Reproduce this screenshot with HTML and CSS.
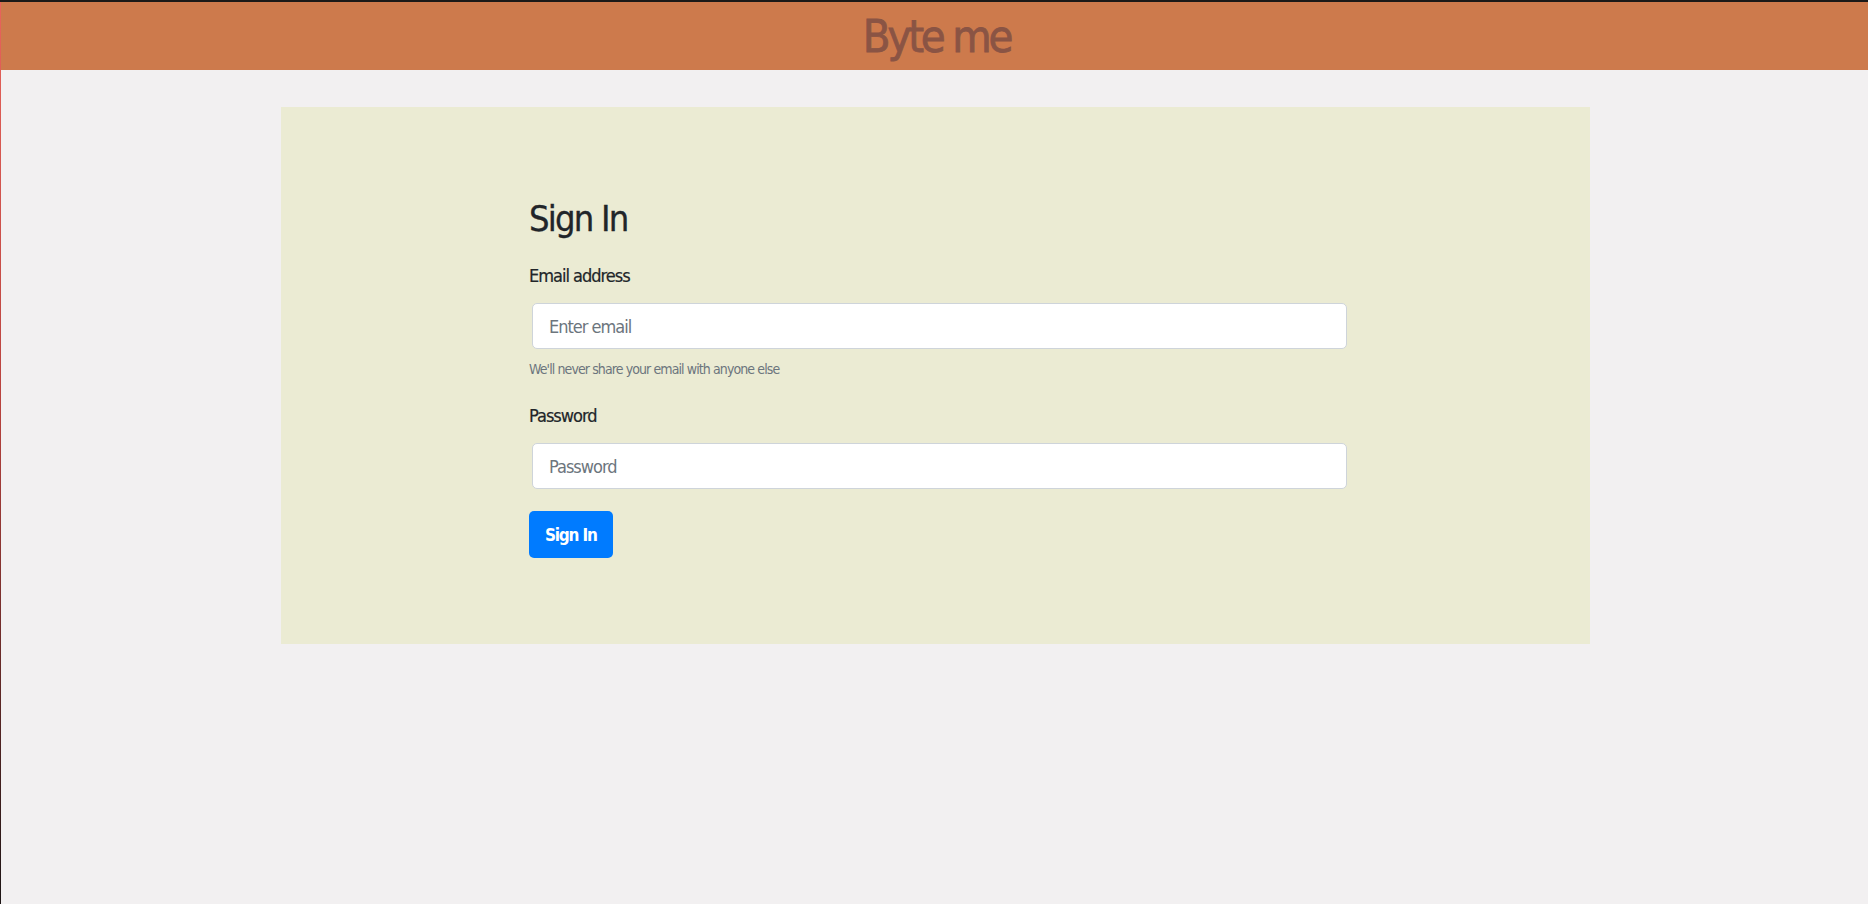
FILE: index.html
```html
<!DOCTYPE html>
<html lang="en">
<head>
<meta charset="utf-8">
<title>Byte me</title>
<link rel="stylesheet" href="styles.css">
</head>
<body>
<header class="topbar">
  <h1 class="brand">Byte me</h1>
</header>
<main class="page">
  <section class="card">
    <form class="signin">
      <h2 class="title">Sign In</h2>
      <div class="group">
        <label class="label" for="email">Email address</label>
        <input class="control" id="email" type="email" placeholder="Enter email">
        <small class="hint">We'll never share your email with anyone else</small>
      </div>
      <div class="group">
        <label class="label" for="pw">Password</label>
        <input class="control" id="pw" type="password" placeholder="Password">
      </div>
      <button class="btn" type="button">Sign In</button>
    </form>
  </section>
</main>
</body>
</html>
```
FILE: styles.css
```css
html {
  border-top: 2px solid #1b1918;
  padding-left: 1px;
  background: linear-gradient(#e8645c, #b8423e 45%, #1c1414) left top / 1px 100% no-repeat, #f2f0f1;
}
body {
  margin: 0;
  min-height: 902px;
  font-family: "DejaVu Sans Condensed", "DejaVu Sans", sans-serif;
  font-stretch: condensed;
  color: #212529;
  background: #f2f0f1;
}
.topbar {
  height: 68px;
  background: #cd7a4c;
  display: flex;
  align-items: center;
  justify-content: center;
}
.brand {
  margin: 0 0 0 4px;
  font-size: 45px;
  line-height: 1;
  font-weight: 400;
  color: #8a5444;
  letter-spacing: -3.2px;
  -webkit-text-stroke: 0.8px #8a5444;
}
.page {
  padding-top: 37px;
}
.card {
  width: 1309px;
  height: 537px;
  margin-left: 280px;
  padding-top: 89px;
  box-sizing: border-box;
  background: #ebebd3;
}
.signin {
  width: 818px;
  margin-left: 248px;
}
.title {
  margin: 0 0 22px;
  font-size: 36px;
  line-height: 46px;
  font-weight: 400;
  letter-spacing: -1.8px;
  -webkit-text-stroke: 0.3px #212529;
}
.group {
  margin-bottom: 24px;
}
.group + .group {
  margin-bottom: 22px;
}
.label {
  display: block;
  font-size: 18px;
  line-height: 23px;
  letter-spacing: -1px;
  margin-bottom: 16px;
  -webkit-text-stroke: 0.2px #212529;
}
.control {
  display: block;
  width: 815px;
  height: 46px;
  margin-left: 3px;
  box-sizing: border-box;
  border: 1px solid #ced4da;
  border-radius: 5px;
  background: #fff;
  padding: 0 16px;
  font: inherit;
  font-size: 18px;
  letter-spacing: -1px;
  color: #495057;
}
.control::placeholder {
  color: #6c757d;
  opacity: 1;
}
.hint {
  display: block;
  margin-top: 9px;
  font-size: 14px;
  line-height: 22px;
  letter-spacing: -0.9px;
  color: #6c757d;
}
.btn {
  display: block;
  height: 47px;
  padding: 0 16px;
  border: 0;
  border-radius: 5px;
  background: #007bff;
  color: #fff;
  font: inherit;
  font-size: 17px;
  font-weight: 700;
  letter-spacing: -1.2px;
}
```
